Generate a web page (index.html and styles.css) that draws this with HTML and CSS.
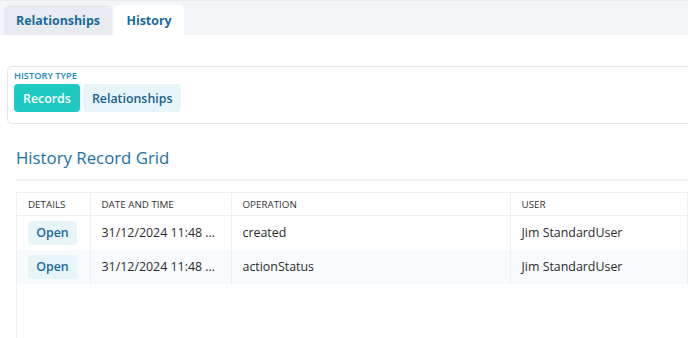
FILE: index.html
```html
<!DOCTYPE html>
<html lang="en">
<head>
    <meta charset="UTF-8">
    <meta name="viewport" content="width=device-width, initial-scale=1.0">
    <title>History</title>
    <link rel="stylesheet" href="styles.css">
</head>
<body>

<div class="tab-bar">
    <div class="tab">Relationships</div>
    <div class="tab active">History</div>
</div>

<div class="filter-box">
    <div class="filter-label">HISTORY TYPE</div>
    <div class="filter-buttons">
        <button class="seg active">Records</button>
        <button class="seg">Relationships</button>
    </div>
</div>

<div class="grid-section">
    <h2 class="grid-title">History Record Grid</h2>

    <div class="table-container">
        <table class="grid">
            <thead>
                <tr>
                    <th class="col-details">DETAILS</th>
                    <th class="col-date">DATE AND TIME</th>
                    <th class="col-op">OPERATION</th>
                    <th>USER</th>
                </tr>
            </thead>
            <tbody>
                <tr>
                    <td><span class="open-btn">Open</span></td>
                    <td>31/12/2024 11:48 ...</td>
                    <td>created</td>
                    <td>Jim StandardUser</td>
                </tr>
                <tr class="alt">
                    <td><span class="open-btn">Open</span></td>
                    <td>31/12/2024 11:48 ...</td>
                    <td>actionStatus</td>
                    <td>Jim StandardUser</td>
                </tr>
            </tbody>
        </table>
    </div>
</div>

</body>
</html>
```

FILE: styles.css
```css
* {
    box-sizing: border-box;
}

body {
    margin: 0;
    font-family: "Open Sans", Arial, sans-serif;
    color: #333;
    background-color: #fff;
    overflow: hidden;
}

.tab-bar {
    display: flex;
    align-items: flex-end;
    gap: 2px;
    height: 35px;
    padding-left: 4px;
    background-color: #f3f6f8;
    border-top: 1px solid #e8ecef;
}

.tab {
    height: 30px;
    width: 108px;
    display: flex;
    align-items: center;
    justify-content: center;
    font-size: 12.4px;
    font-weight: 700;
    color: #1a6a9e;
    background-color: #e8ecf0;
    border-radius: 6px 6px 0 0;
}

.tab.active {
    background-color: #fff;
    width: 70px;
}

.filter-box {
    margin: 31px 0 0 7px;
    height: 58px;
    padding: 2px 6px 0;
    border: 1px solid #e4e6e8;
    border-right: none;
    border-radius: 5px 0 0 5px;
}

.filter-label {
    font-size: 9.3px;
    font-weight: 600;
    color: #1d8ac0;
    line-height: 13px;
}

.filter-buttons {
    display: flex;
    gap: 3px;
    margin-top: 2px;
}

.seg {
    height: 28px;
    padding: 0 9px;
    border: none;
    border-radius: 4px;
    font-family: "Open Sans", Arial, sans-serif;
    font-size: 12.4px;
    font-weight: 600;
    color: #1a5f8e;
    background-color: #e7f5f9;
}

.seg.active {
    background-color: #1ec9c1;
    color: #fff;
}

.grid-section {
    padding-left: 16px;
}

.grid-title {
    margin: 22px 0 0;
    padding-bottom: 9px;
    font-size: 16.8px;
    font-weight: 400;
    line-height: 24px;
    color: #1c6fa4;
    border-bottom: 2px solid #eff0f1;
}

.table-container {
    margin-top: 11px;
    height: 146px;
    border-left: 1px solid #eeeff0;
}

.grid {
    width: 100%;
    border-collapse: collapse;
    table-layout: fixed;
}

.grid th {
    height: 23px;
    padding: 0 11px;
    text-align: left;
    font-size: 9.8px;
    font-weight: 400;
    color: #333;
    border-top: 1px solid #eeeff0;
    border-bottom: 1px solid #eeeff0;
    border-right: 1px solid #eeeff0;
}

.grid td {
    height: 34px;
    padding: 0 11px;
    font-size: 12.4px;
    color: #2b2b2b;
    white-space: nowrap;
    border-right: 1px solid #eeeff0;
}

.grid tr.alt td {
    background-color: #f7fbfd;
}

.col-details {
    width: 73px;
}

.col-date {
    width: 141px;
}

.col-op {
    width: 279px;
}

.open-btn {
    display: inline-block;
    width: 49px;
    line-height: 24px;
    text-align: center;
    border-radius: 4px;
    font-weight: 600;
    color: #1a6a9e;
    background-color: #e7f5f9;
}
```
